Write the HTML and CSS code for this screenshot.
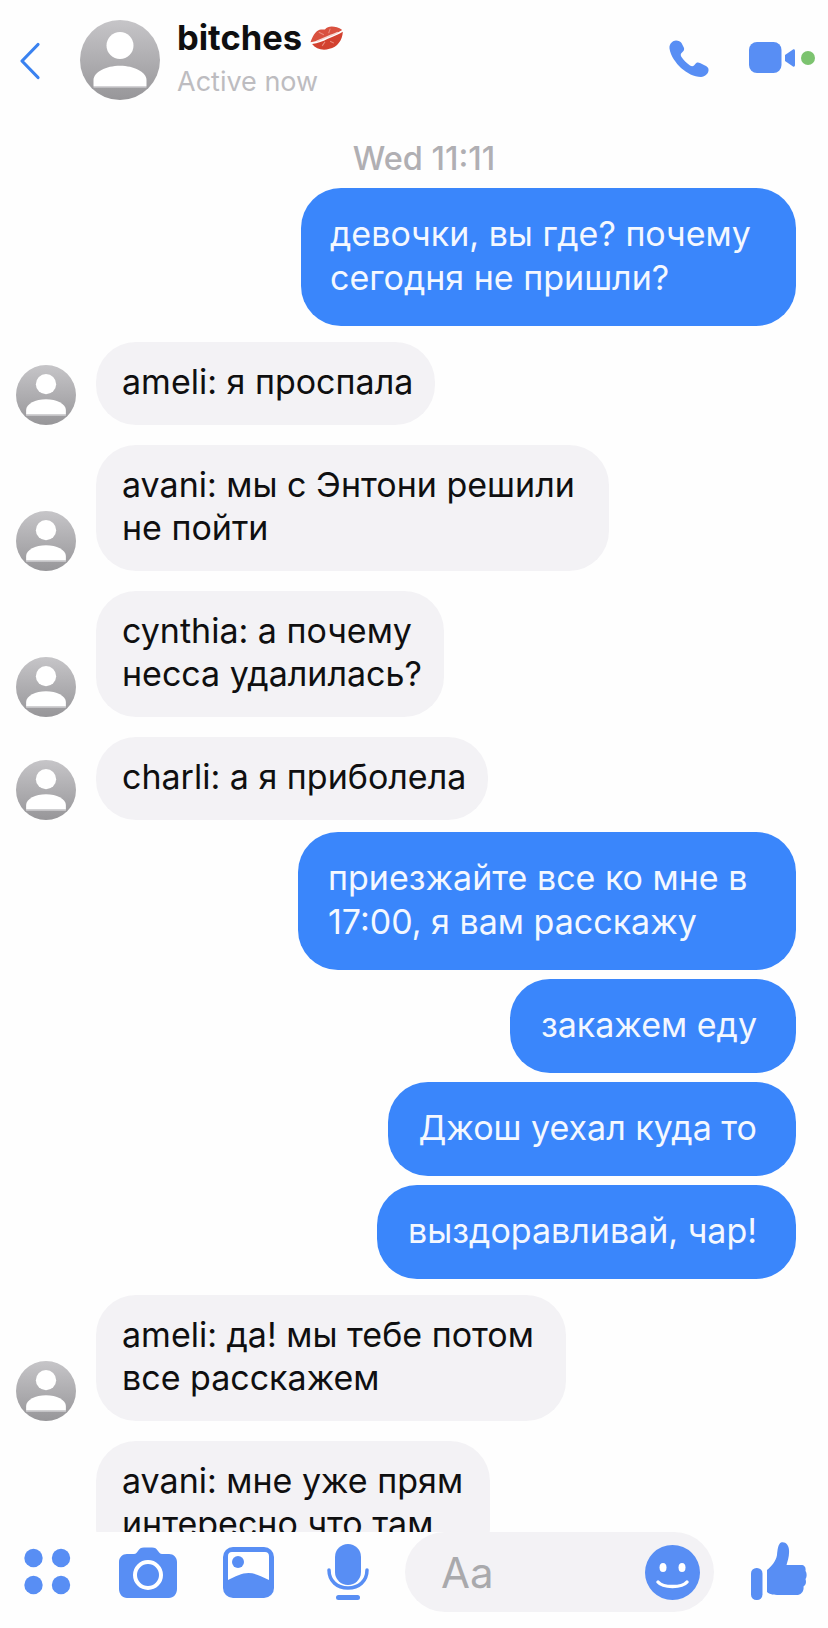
FILE: index.html
```html
<!DOCTYPE html>
<html lang="en">
<head>
  <meta charset="UTF-8" />
  <meta name="viewport" content="width=device-width, initial-scale=1" />
  <title>bitches</title>
  <link rel="stylesheet" href="styles.css">
</head>
<body>
  <svg class="defs" width="0" height="0" aria-hidden="true">
    <defs>
      <linearGradient id="avatar-bg" x1="0" y1="0" x2="0" y2="1">
        <stop offset="0" stop-color="#c6c5c8" />
        <stop offset="1" stop-color="#979699" />
      </linearGradient>
      <symbol id="avatar" viewBox="0 0 80 80">
        <circle cx="40" cy="40" r="40" fill="url(#avatar-bg)" />
        <circle cx="40" cy="25.5" r="13.5" fill="#fff" />
        <path d="M13.5 66V60C13.5 52 26 45.7 40 45.7S66.5 52 66.5 60V66Z" fill="#fff" />
        <rect x="13.5" y="66" width="53" height="1.6" fill="#d4d3d6" />
      </symbol>
    </defs>
  </svg>

  <div class="phone">
    <header class="top-bar">
      <svg class="back" width="22" height="38" viewBox="0 0 22 38">
        <path d="M19 2.5 3 19 19 35.5" fill="none" stroke="#3a82f0" stroke-width="3.2" stroke-linecap="round" stroke-linejoin="round" />
      </svg>
      <svg class="avatar-big" width="80" height="80"><use href="#avatar" /></svg>
      <div class="chat-info">
        <div class="chat-name">bitches
          <svg class="lips" width="36" height="32" viewBox="0 0 36 32">
            <g transform="rotate(-18 18 16)">
              <path d="M1 15C6 8 11 5 15 6C17 6.500 18 7.500 19 7C23 4.500 30 7 35 13C30 14.500 24 15 18 15C12 16 6 16 1 15Z" fill="#d9513f" />
              <path d="M2 17C8 18 13 18 18 17C24 17 30 16 35 15C32 23 25 28 17 27C10 27 4 23 2 17Z" fill="#d2412f" />
              <path d="M7 16C13 15 22 15 30 14" fill="none" stroke="#f6d5ce" stroke-width="1.600" />
              <path d="M12 8 16 12M24 8 21 12M11 22 15 19M23 23 20 20" stroke="#eb8d7f" stroke-width="1" />
            </g>
          </svg>
        </div>
        <div class="chat-status">Active now</div>
      </div>
      <svg class="phone-icon" width="40" height="38" viewBox="0 0 40 38">
        <path d="M7 1.500C4 1.500 0 4.500 .500 9.500C1.500 17 7 24 12 29C18 34 25 38 32 38C36 38 40 34 39.500 30.500C39.500 28.500 38 27.500 36 26.500L31 24C29 23 27.500 23.500 26.500 24.800L25 26.500C24 27.500 22.500 27.500 21 26.500C17.500 24 14.500 21 12.500 18C11.500 16.500 11.500 15 12.500 14L14 12.500C15 11.500 15.500 10 14.800 8.500L12.500 4C11.500 2.500 9.500 1.500 7 1.500Z" fill="#588ef4" />
      </svg>
      <svg class="video-icon" width="67" height="31" viewBox="0 0 67 31">
        <rect x="0" y="0" width="32.500" height="31" rx="8" fill="#588ef4" />
        <path d="M36 13 44 7.500C45 7 46 7.500 46 9V23C46 24.500 45 25 44 24.500L36 19Z" fill="#588ef4" />
        <circle cx="59" cy="16" r="7" fill="#7cc36f" />
      </svg>
    </header>

    <main class="messages">
      <div class="timestamp">Wed 11:11</div>

      <div class="msg out"><div class="bubble w-first">девочки, вы где? почему<br>сегодня не пришли?</div></div>

      <div class="msg in">
        <svg class="avatar-small" width="60" height="60"><use href="#avatar" /></svg>
        <div class="bubble">ameli: я проспала</div>
      </div>
      <div class="msg in">
        <svg class="avatar-small" width="60" height="60"><use href="#avatar" /></svg>
        <div class="bubble w-anthony">avani: мы с Энтони решили<br>не пойти</div>
      </div>
      <div class="msg in">
        <svg class="avatar-small" width="60" height="60"><use href="#avatar" /></svg>
        <div class="bubble">cynthia: а почему<br>несса удалилась?</div>
      </div>
      <div class="msg in">
        <svg class="avatar-small" width="60" height="60"><use href="#avatar" /></svg>
        <div class="bubble">charli: а я приболела</div>
      </div>

      <div class="msg out"><div class="bubble w-come">приезжайте все ко мне в<br>17:00, я вам расскажу</div></div>
      <div class="msg out"><div class="bubble">закажем еду</div></div>
      <div class="msg out"><div class="bubble">Джош уехал куда то</div></div>
      <div class="msg out"><div class="bubble">выздоравливай, чар!</div></div>

      <div class="msg in">
        <svg class="avatar-small" width="60" height="60"><use href="#avatar" /></svg>
        <div class="bubble w-tell">ameli: да! мы тебе потом<br>все расскажем</div>
      </div>
      <div class="msg in no-avatar">
        <div class="bubble w-last">avani: мне уже прям<br>интересно что там</div>
      </div>
    </main>

    <footer class="composer">
      <div class="tool">
        <svg width="48" height="48" viewBox="0 0 48 48" fill="#588ef4">
          <circle cx="9.500" cy="10" r="9.200" /><circle cx="37" cy="10" r="9.200" />
          <circle cx="9.500" cy="37" r="9.200" /><circle cx="37" cy="37" r="9.200" />
        </svg>
      </div>
      <div class="tool">
        <svg width="58" height="51" viewBox="0 0 58 51">
          <path d="M8 7H15C17 7 18 5.500 19 4C20.500 1.500 22 .500 25 .500H33C36 .500 37.500 1.500 39 4C40 5.500 41 7 43 7H50C54.500 7 58 10.500 58 15V42C58 47 54.500 51 50 51H8C3.500 51 0 47 0 42V15C0 10.500 3.500 7 8 7Z" fill="#588ef4" />
          <circle cx="29" cy="28" r="13" fill="none" stroke="#fff" stroke-width="4" />
        </svg>
      </div>
      <div class="tool">
        <svg width="51" height="51" viewBox="0 0 51 51">
          <rect x="0" y="0" width="51" height="51" rx="10" fill="#588ef4" />
          <path d="M5 9C5 6.500 6.500 5 9 5H42C44.500 5 46 6.500 46 9V33C39 29.500 32 26 25.500 26C19 26 12 29.500 5 33Z" fill="#fff" />
          <circle cx="15" cy="15" r="6" fill="#588ef4" />
        </svg>
      </div>
      <div class="tool">
        <svg width="42" height="56" viewBox="0 0 42 56">
          <rect x="8" y="0" width="26" height="41" rx="13" fill="#588ef4" />
          <path d="M2 26C2 37 10 44 21 44S40 37 40 26" fill="none" stroke="#588ef4" stroke-width="3.500" stroke-linecap="round" />
          <rect x="9" y="51" width="24" height="5" rx="2.500" fill="#588ef4" />
        </svg>
      </div>
      <div class="input-pill">
        <span class="placeholder">Aa</span>
        <svg class="smile" width="55" height="55" viewBox="0 0 55 55">
          <circle cx="27.500" cy="27.500" r="27.500" fill="#588ef4" />
          <ellipse cx="18" cy="22.500" rx="3.500" ry="4.500" fill="#fff" />
          <ellipse cx="37" cy="22.500" rx="3.500" ry="4.500" fill="#fff" />
          <path d="M13 37C18 43 37 43 42 37" fill="none" stroke="#fff" stroke-width="3.500" stroke-linecap="round" />
        </svg>
      </div>
      <svg class="like" width="56" height="58" viewBox="0 0 56 58" fill="#588ef4">
        <rect x="0" y="26" width="11.500" height="32" rx="5.500" />
        <path d="M16 28C21 24 25 19 26 13C26.500 8 27 2 30 .500C34 -1 38 3 38 8C38.500 14 36.500 19 35.500 23H50C54 23 55 26 54.500 29C56 31 56 35 54.500 37C55.500 40 55 43 52.500 44.500C53 48 51.500 52 47 53H30C25 53 19 53 16 50Z" />
      </svg>
    </footer>
  </div>
</body>
</html>
```

FILE: styles.css
```css
:root {
  --blue: #3a86fb;
  --gray: #f3f2f5;
  --font: 'Inter', 'Noto Sans', sans-serif;
}
* {
  box-sizing: border-box;
}
html, body {
  margin: 0;
  padding: 0;
}
body {
  font-family: var(--font);
  background: #fefefe;
  color: #0f0f10;
}
.defs {
  display: block;
  height: 0;
}
.phone {
  width: 828px;
  height: 1628px;
  display: flex;
  flex-direction: column;
  overflow: hidden;
}

/* header */
.top-bar {
  height: 128px;
  flex: none;
  padding: 20px 12px 0 19px;
  display: flex;
  align-items: flex-start;
}
.back {
  margin-top: 22px;
  flex: none;
}
.avatar-big {
  margin-left: 39px;
  flex: none;
}
.chat-info {
  margin-left: 17px;
  flex: 1;
}
.chat-name {
  font-size: 34.5px;
  font-weight: 700;
  line-height: 36px;
  display: flex;
  align-items: center;
  gap: 7px;
}
.chat-status {
  font-size: 27px;
  line-height: 36px;
  margin-top: 8px;
  color: #bdbcc0;
}
.phone-icon {
  margin-top: 19px;
  flex: none;
}
.video-icon {
  margin: 22px 0 0 40px;
  flex: none;
}

/* messages */
.messages {
  flex: 1;
  min-height: 0;
  overflow: hidden;
  padding: 0 32px 0 16px;
}
.timestamp {
  text-align: center;
  color: #b0afb3;
  font-size: 32.5px;
  font-weight: 500;
  line-height: 40px;
  padding: 11px 0 0 36px;
  height: 60px;
}
.msg {
  display: flex;
  align-items: flex-end;
}
.msg.out {
  justify-content: flex-end;
}
.msg.in {
  gap: 20px;
}
.msg.no-avatar {
  padding-left: 80px;
}
.msg.in + .msg.in {
  margin-top: 20px;
}
.msg.out + .msg.out {
  margin-top: 9px;
}
.msg.in + .msg.out {
  margin-top: 12px;
}
.msg.out + .msg.in {
  margin-top: 16px;
}
.avatar-small {
  flex: none;
}
.bubble {
  font-size: 34px;
  white-space: nowrap;
  border-radius: 40px;
}
.in .bubble {
  background: var(--gray);
  line-height: 43px;
  padding: 18px 22px 22px 26px;
}
.out .bubble {
  background: var(--blue);
  color: #f4f8ff;
  line-height: 44px;
  padding: 24px 39px 26px 31px;
}
.out .w-first {
  width: 495px;
  padding-left: 29px;
}
.out .w-come {
  width: 498px;
  padding-left: 30px;
}
.w-anthony {
  width: 513px;
}
.w-tell {
  width: 470px;
}
.w-last {
  width: 394px;
}

/* composer */
.composer {
  height: 96px;
  flex: none;
  background: #fefefe;
  display: flex;
  align-items: flex-start;
  gap: 4px;
}
.tool {
  width: 96px;
  height: 80px;
  flex: none;
  display: flex;
  align-items: center;
  justify-content: center;
}
.input-pill {
  width: 309px;
  height: 80px;
  margin-left: 5px;
  flex: none;
  border-radius: 40px;
  background: var(--gray);
  display: flex;
  align-items: center;
  justify-content: space-between;
  padding: 0 14px 0 36px;
}
.placeholder {
  font-size: 42px;
  color: #a9a9ac;
}
.like {
  margin: 10px 0 0 33px;
  flex: none;
}
```
